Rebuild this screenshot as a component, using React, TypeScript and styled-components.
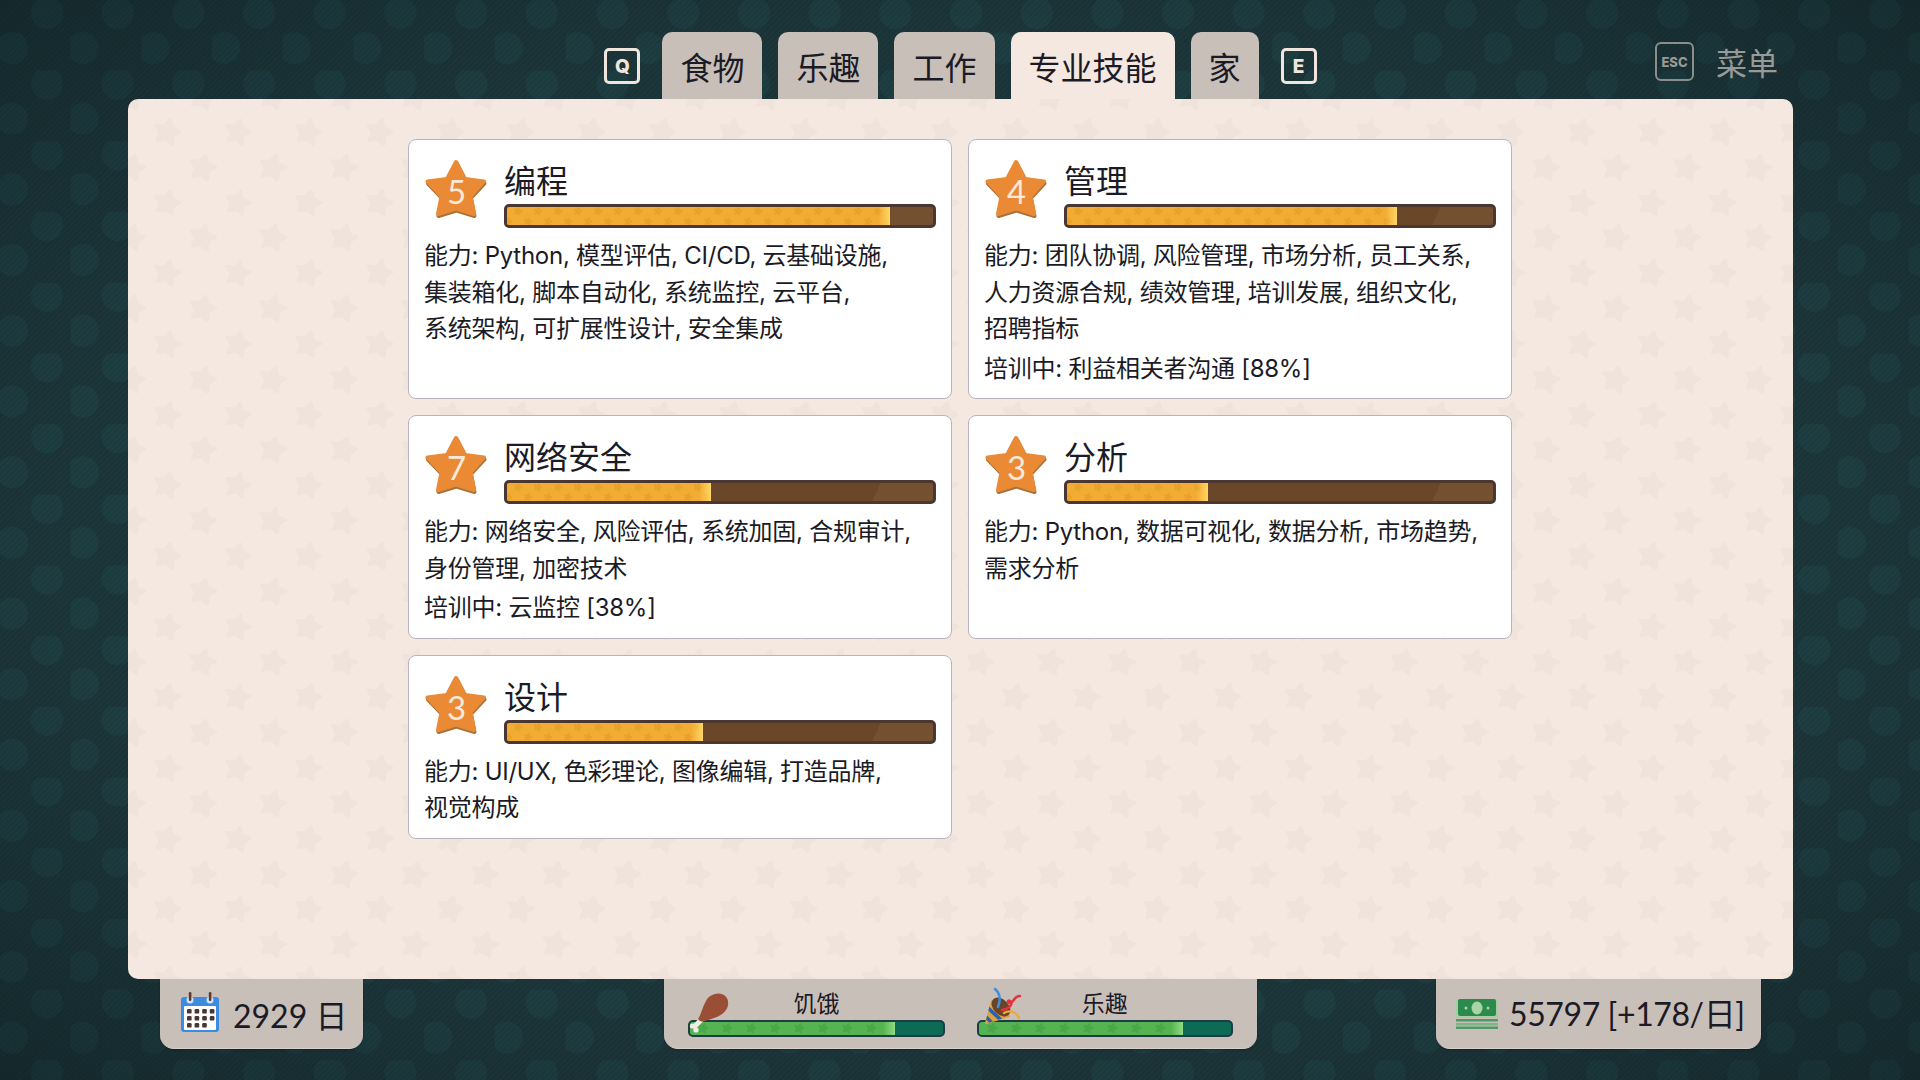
import React from 'react'
import styled, { createGlobalStyle } from 'styled-components'

const fontStack = `'Lato', 'Noto Sans CJK SC', sans-serif`
const bodyStack = `'Inter', 'Noto Sans CJK SC', sans-serif`

// STAR PATTERN
const starPath = (cx: number, cy: number, r: number, rot: number) => {
  const pts: string[] = []
  for (let i = 0; i < 10; i++) {
    const rad = i % 2 === 0 ? r : r * 0.52
    const a = ((-90 + rot + i * 36) * Math.PI) / 180
    pts.push(`${(cx + rad * Math.cos(a)).toFixed(2)},${(cy + rad * Math.sin(a)).toFixed(2)}`)
  }
  return pts.join(' ')
}

const starTile = (size: number, color: string, r: number, rot: number) => {
  const h = size / 2
  const a = [size * 0.55, size * 0.47]
  const b = [a[0] + h - size, a[1] + h]
  const spots = [a, b, [b[0] + size, b[1]], [b[0], b[1] - size], [b[0] + size, b[1] - size]]
  const stars = spots
    .map(([x, y]) => `<polygon points='${starPath(x, y, r, rot)}' fill='${color}' stroke='${color}' stroke-width='${r / 4}' stroke-linejoin='round'/>`)
    .join('')
  const svg = `<svg xmlns='http://www.w3.org/2000/svg' width='${size}' height='${size}'>${stars}</svg>`
  return `url("data:image/svg+xml,${encodeURIComponent(svg)}")`
}

const panelStars = starTile(70.7, '#f0e3db', 13, 14)
const orangeStars = starTile(20, '#e8a22b', 4.2, 14)
const greenStars = starTile(24, '#4aa74c', 5, 14)

const GlobalStyle = createGlobalStyle`
  html, body {
    margin: 0;
    padding: 0;
    background: #1a3135;
  }
  * {
    box-sizing: border-box;
  }
`

const Page = styled.div`
  width: 1920px;
  height: 1080px;
  overflow: hidden;
  padding: 32px 127px 0 128px;
  font-family: ${fontStack};
  color: #1b1b26;
  background-color: #1b3438;
  background-image:
    radial-gradient(ellipse at center, transparent 66%, rgba(5, 15, 18, 0.42) 110%),
    repeating-linear-gradient(135deg, rgba(255, 255, 255, 0.01) 0 2px, rgba(0, 0, 0, 0.02) 2px 4px),
    radial-gradient(circle at 47px 13px, #1d3c40 15.5px, transparent 16.5px),
    radial-gradient(circle at 12px 48px, #1d3c40 15.5px, transparent 16.5px);
  background-size: 100% 100%, auto, 70.7px 70.7px, 70.7px 70.7px;
`

const TopBar = styled.header`
  display: grid;
  grid-template-columns: 1fr auto 1fr;
  height: 67px;
`

const TabRow = styled.nav`
  grid-column: 2;
  display: flex;
  align-items: flex-start;
`

const KeyCap = styled.div<{ $side: 'left' | 'right' }>`
  width: 36px;
  height: 36px;
  margin-top: 16px;
  margin-left: ${p => (p.$side === 'right' ? '22px' : '0')};
  margin-right: ${p => (p.$side === 'left' ? '22px' : '0')};
  border: 3px solid #f1e6dd;
  border-radius: 5px;
  color: #f1e6dd;
  font-family: 'Inter', sans-serif;
  font-size: 19px;
  font-weight: 800;
  display: flex;
  align-items: center;
  justify-content: center;
`

const Tab = styled.div<{ $active?: boolean; $first?: boolean }>`
  height: 67px;
  padding: 15px 18px 0;
  margin-left: ${p => (p.$first ? '0' : '16px')};
  border-radius: 10px 10px 0 0;
  background: ${p => (p.$active ? '#f5e8e1' : '#c9bfb9')};
  font-size: 32px;
  line-height: 42px;
  white-space: nowrap;
`

const MenuHint = styled.div`
  grid-column: 3;
  justify-self: end;
  display: flex;
  align-items: flex-start;
  gap: 22px;
  padding: 10px 15px 0 0;
  color: #989a95;
`

const EscKey = styled.div`
  width: 39px;
  height: 39px;
  border: 2.5px solid #8b8f8b;
  border-radius: 6px;
  font-family: 'Inter', sans-serif;
  font-size: 13px;
  font-weight: 800;
  display: flex;
  align-items: center;
  justify-content: center;
`

const MenuLabel = styled.div`
  font-size: 31px;
  line-height: 42px;
`

const Panel = styled.main`
  height: 880px;
  padding: 40px 0 0 280px;
  border-radius: 10px;
  background-color: #f5e8e1;
  background-image: ${panelStars};
`

const CardGrid = styled.div`
  width: 1104px;
  display: grid;
  grid-template-columns: 544px 544px;
  column-gap: 16px;
  row-gap: 16px;
  align-items: stretch;
`

const Card = styled.article`
  padding: 18px 15px 11px;
  background: #fff;
  border: 1.5px solid #bab3bf;
  border-radius: 8px;
`

const CardHead = styled.div`
  display: flex;
  gap: 16px;
  margin-bottom: 10px;
`

const Badge = styled.div`
  position: relative;
  flex: none;
  margin-left: 1px;
  width: 63px;
  height: 62px;
`

const BadgeNumber = styled.span`
  position: absolute;
  left: 0;
  right: 0;
  top: 14px;
  text-align: center;
  color: #fbe9da;
  font-size: 33px;
  line-height: 38px;
`

const HeadText = styled.div`
  flex: 1;
`

const CardTitle = styled.h3`
  margin: 0;
  font-size: 32px;
  font-weight: 400;
  line-height: 46px;
`

const Track = styled.div<{ $kind: 'skill' | 'need' }>`
  height: ${p => (p.$kind === 'skill' ? '24px' : '17px')};
  border: ${p => (p.$kind === 'skill' ? '3px solid #4a3731' : '2px solid #1d3d44')};
  border-radius: 5px;
  overflow: hidden;
  background: ${p =>
    p.$kind === 'skill'
      ? 'linear-gradient(115deg, #6a4729 0 86%, #73502f 86%)'
      : '#0c6a55'};
`

const Fill = styled.div<{ $kind: 'skill' | 'need' }>`
  height: 100%;
  background-color: ${p => (p.$kind === 'skill' ? '#f2ab33' : '#55b352')};
  background-image:
    linear-gradient(90deg, transparent calc(100% - 12px), ${p => (p.$kind === 'skill' ? '#ffd763' : '#90dc85')} 100%),
    ${p => (p.$kind === 'skill' ? orangeStars : greenStars)};
  background-size: 100% 100%, auto;
  background-position: 0 0, 0 -5px;
`

const Lines = styled.div`
  font-family: ${bodyStack};
  font-size: 24px;
  line-height: 36.5px;
  letter-spacing: -0.25px;
`

const Line = styled.div`
  white-space: nowrap;
`

const Training = styled.div`
  margin-top: 3px;
  font-family: ${bodyStack};
  font-size: 24px;
  line-height: 36.5px;
  letter-spacing: -0.25px;
  white-space: nowrap;
`

const BottomBar = styled.footer`
  display: grid;
  grid-template-columns: 1fr auto 1fr;
  padding: 0 32px 0 32px;
`

const Plate = styled.div`
  height: 70px;
  background: #c9bfb9;
  border-radius: 0 0 14px 14px;
  border-bottom: 1.5px solid #d8cfc9;
  box-shadow: 0 1px 2px rgba(0, 0, 0, 0.25);
  display: flex;
`

const DatePlate = styled(Plate)`
  justify-self: start;
  width: 203px;
  padding: 14px 0 0 21px;
  gap: 14px;
`

const NeedsPlate = styled(Plate)`
  width: 592.5px;
  padding: 9px 24px 0;
  gap: 32px;
`

const MoneyPlate = styled(Plate)`
  justify-self: end;
  width: 325px;
  padding: 20px 0 0 20px;
  gap: 11px;
`

const BigValue = styled.div`
  font-size: 32px;
  line-height: 46px;
  white-space: nowrap;
`

const MoneyValue = styled(BigValue)`
  margin-top: -8px;
  letter-spacing: -0.4px;
`

const Need = styled.div`
  position: relative;
  flex: 1;
`

const NeedLabel = styled.div`
  text-align: center;
  font-size: 23px;
  line-height: 30px;
  margin-bottom: 2px;
`

const NeedIcon = styled.div<{ $left: number; $top: number }>`
  position: absolute;
  left: ${p => p.$left}px;
  top: ${p => p.$top}px;
  line-height: 0;
`

const StarBadge = () => (
  <svg width="63" height="62" viewBox="0 0 63 62">
    <path
      d="M31.5 5 L40.5 22.5 L59.5 25.5 L46 40 L49.5 58 L31.5 52.5 L13.5 58 L17 40 L3 25.5 L22.5 22.5 Z"
      fill="#a8703a"
      stroke="#a8703a"
      strokeWidth="4"
      strokeLinejoin="round"
    />
    <path
      d="M31 4 L40 21 L59 23.5 L45.5 38.5 L49 56 L31 50.5 L13 56 L16.5 38.5 L2.5 23.5 L22 21 Z"
      fill="#ea8a35"
      stroke="#ea8a35"
      strokeWidth="4"
      strokeLinejoin="round"
    />
  </svg>
)

const CalendarIcon = () => (
  <svg width="38" height="40" viewBox="0 0 38 40" style={{ flex: 'none', marginTop: '-1px' }}>
    <rect x="0" y="5" width="38" height="35" rx="3" fill="#3c8be0" />
    <rect x="3" y="14" width="32" height="24" rx="1" fill="#fff" />
    <circle cx="9" cy="8" r="3.5" fill="#cfe2f7" />
    <circle cx="29" cy="8" r="3.5" fill="#cfe2f7" />
    <rect x="7.8" y="0" width="2.6" height="9" rx="1.2" fill="#5a3a30" />
    <rect x="27.8" y="0" width="2.6" height="9" rx="1.2" fill="#5a3a30" />
    {[0, 1, 2].map(row =>
      [0, 1, 2, 3].filter(col => row < 2 || col < 3).map(col => (
        <rect key={`${row}-${col}`} x={6 + col * 7.6} y={17 + row * 7} width="4.6" height="4.6" rx="1.2" fill="#4b3532" />
      ))
    )}
  </svg>
)

const DrumstickIcon = () => (
  <svg width="44" height="44" viewBox="0 0 44 44">
    <path d="M13 27 L7 33" stroke="#f2ece6" strokeWidth="5" strokeLinecap="round" />
    <circle cx="4.5" cy="33" r="2.6" fill="#f2ece6" />
    <circle cx="8" cy="37" r="2.6" fill="#f2ece6" />
    <path
      d="M10 26 C13 22 14 15 18 8 C21 2 29 -1 35 1.5 C41 4 41.5 12 38 17 C34 23 26 25 20 27 C16 28.5 13 30 10 26 Z"
      fill="#9b4e36"
    />
  </svg>
)

const PopperIcon = () => (
  <svg width="44" height="42" viewBox="0 0 44 42">
    <defs>
      <clipPath id="popper-cone">
        <path d="M4 38 L10 14 L29 30 Z" />
      </clipPath>
    </defs>
    <path d="M5 37 L11 15 L28 30 Z" fill="#d9a441" stroke="#d9a441" strokeWidth="2" strokeLinejoin="round" />
    <g clipPath="url(#popper-cone)" stroke="#2f5fb0" strokeWidth="3.6">
      <path d="M2 28 L13 39" />
      <path d="M6 21 L20 34" />
    </g>
    <ellipse cx="20" cy="21" rx="7.5" ry="11" transform="rotate(-45 20 21)" fill="#6b4427" />
    <path d="M14 3 C19 7 20 14 17 21" fill="none" stroke="#3d8fe0" strokeWidth="2.6" strokeLinecap="round" />
    <path d="M21 24 C27 23 33 19 29 15 C26 13 26 19 31 16 C34 13 34 10 39 10" fill="none" stroke="#e5323f" strokeWidth="2.6" strokeLinecap="round" />
    <path d="M23 27 C28 24 35 25 38 32" fill="none" stroke="#eea93a" strokeWidth="2.4" strokeLinecap="round" />
  </svg>
)

const MoneyIcon = () => (
  <svg width="42" height="30" viewBox="0 0 42 30" style={{ flex: 'none' }}>
    <rect x="0" y="0" width="42" height="19" fill="#a5cf9f" />
    <rect x="2" y="0" width="38" height="17" rx="2" fill="#2d8a4e" />
    <ellipse cx="21" cy="9" rx="5.5" ry="6.5" fill="#a9d4a3" />
    <circle cx="10" cy="9" r="1.5" fill="#a9d4a3" />
    <circle cx="32" cy="9" r="1.5" fill="#a9d4a3" />
    <rect x="0" y="20" width="42" height="2.5" fill="#4f9c62" />
    <rect x="0" y="24" width="42" height="2.5" fill="#7db686" />
    <rect x="0" y="27.5" width="42" height="2.5" fill="#4f9c62" />
  </svg>
)

type Skill = {
  level: number
  name: string
  progress: number
  lines: string[]
  training?: string
}

const skills: Skill[] = [
  {
    level: 5,
    name: '编程',
    progress: 90,
    lines: ['能力: Python, 模型评估, CI/CD, 云基础设施,', '集装箱化, 脚本自动化, 系统监控, 云平台,', '系统架构, 可扩展性设计, 安全集成'],
  },
  {
    level: 4,
    name: '管理',
    progress: 77.5,
    lines: ['能力: 团队协调, 风险管理, 市场分析, 员工关系,', '人力资源合规, 绩效管理, 培训发展, 组织文化,', '招聘指标'],
    training: '培训中: 利益相关者沟通 [88%]',
  },
  {
    level: 7,
    name: '网络安全',
    progress: 48,
    lines: ['能力: 网络安全, 风险评估, 系统加固, 合规审计,', '身份管理, 加密技术'],
    training: '培训中: 云监控 [38%]',
  },
  {
    level: 3,
    name: '分析',
    progress: 33,
    lines: ['能力: Python, 数据可视化, 数据分析, 市场趋势,', '需求分析'],
  },
  {
    level: 3,
    name: '设计',
    progress: 46,
    lines: ['能力: UI/UX, 色彩理论, 图像编辑, 打造品牌,', '视觉构成'],
  },
]

const tabs = ['食物', '乐趣', '工作', '专业技能', '家']

const App = () => {
  return (
    <>
      <GlobalStyle />
      <Page>
        <TopBar>
          <TabRow>
            <KeyCap $side="left">Q</KeyCap>
            {tabs.map((tab, i) => (
              <Tab key={tab} $first={i === 0} $active={tab === '专业技能'}>{tab}</Tab>
            ))}
            <KeyCap $side="right">E</KeyCap>
          </TabRow>
          <MenuHint>
            <EscKey>ESC</EscKey>
            <MenuLabel>菜单</MenuLabel>
          </MenuHint>
        </TopBar>

        <Panel>
          <CardGrid>
            {skills.map(skill => (
              <Card key={skill.name}>
                <CardHead>
                  <Badge>
                    <StarBadge />
                    <BadgeNumber>{skill.level}</BadgeNumber>
                  </Badge>
                  <HeadText>
                    <CardTitle>{skill.name}</CardTitle>
                    <Track $kind="skill">
                      <Fill $kind="skill" style={{ width: `${skill.progress}%` }} />
                    </Track>
                  </HeadText>
                </CardHead>
                <Lines>
                  {skill.lines.map(line => <Line key={line}>{line}</Line>)}
                </Lines>
                {skill.training && <Training>{skill.training}</Training>}
              </Card>
            ))}
          </CardGrid>
        </Panel>

        <BottomBar>
          <DatePlate>
            <CalendarIcon />
            <BigValue>2929 日</BigValue>
          </DatePlate>
          <NeedsPlate>
            <Need>
              <NeedIcon $left={0} $top={5}><DrumstickIcon /></NeedIcon>
              <NeedLabel>饥饿</NeedLabel>
              <Track $kind="need"><Fill $kind="need" style={{ width: '81%' }} /></Track>
            </Need>
            <Need>
              <NeedIcon $left={4} $top={-2}><PopperIcon /></NeedIcon>
              <NeedLabel>乐趣</NeedLabel>
              <Track $kind="need"><Fill $kind="need" style={{ width: '81%' }} /></Track>
            </Need>
          </NeedsPlate>
          <MoneyPlate>
            <MoneyIcon />
            <MoneyValue>55797 [+178/日]</MoneyValue>
          </MoneyPlate>
        </BottomBar>
      </Page>
    </>
  )
}

export default App
